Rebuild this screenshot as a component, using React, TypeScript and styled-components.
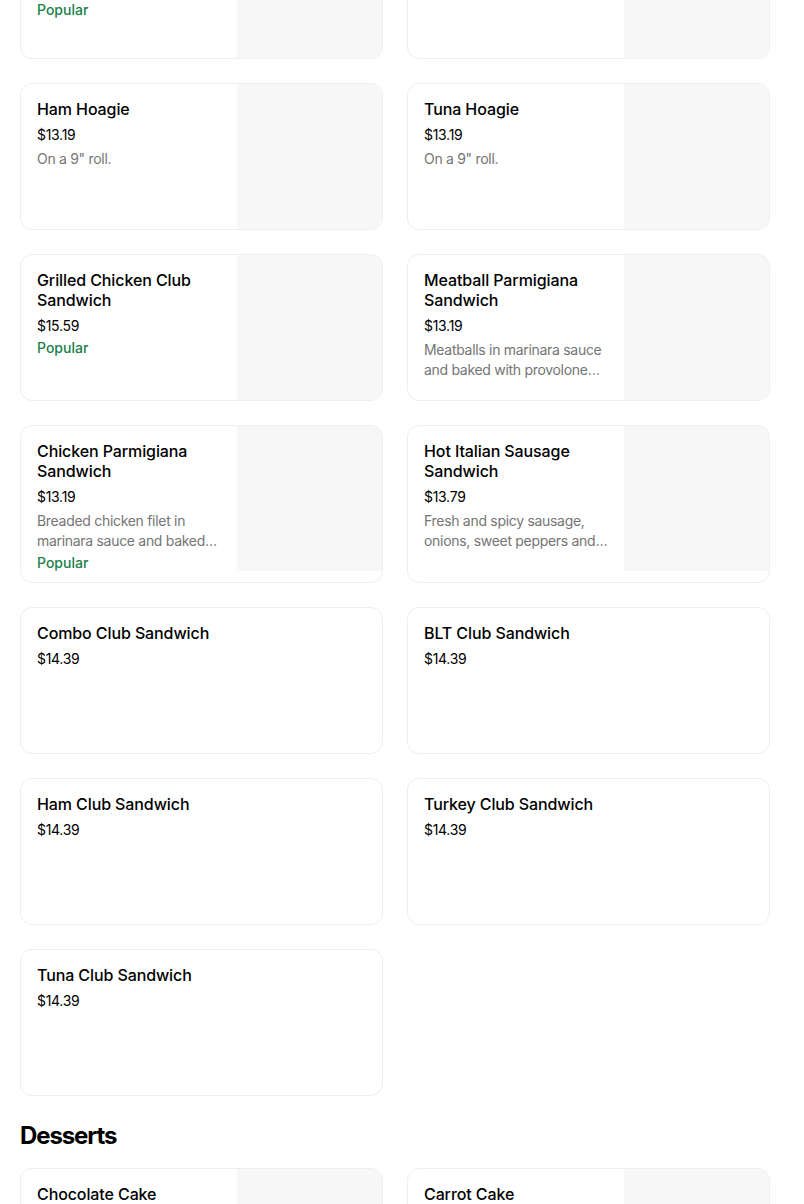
import React from "react";
import styled, { createGlobalStyle } from "styled-components";

const GlobalStyle = createGlobalStyle`
  html, body { margin: 0; padding: 0; background: #ffffff; }
  body {
    font-family: Inter, "Noto Sans", "Liberation Sans", sans-serif;
    color: #000000;
    -webkit-font-smoothing: antialiased;
    overflow: hidden;
  }
  * { box-sizing: border-box; }
`;

const Page = styled.main`
  width: 770px;
  padding: 0 0 0 20px;
  margin-top: -88px;
`;

const Section = styled.section`
  display: flex;
  flex-direction: column;
`;

const SectionTitle = styled.h2`
  margin: 24px 0 16px;
  font-size: 24px;
  line-height: 32px;
  font-weight: 700;
  letter-spacing: -1.1px;
  color: #000;
`;

const Grid = styled.div`
  display: grid;
  grid-template-columns: 363px 363px;
  column-gap: 24px;
  row-gap: 24px;
`;

const Card = styled.article`
  display: flex;
  border: 1px solid #eeeeee;
  border-radius: 12px;
  overflow: hidden;
  background: #ffffff;
  min-height: 147px;
`;

const Info = styled.div`
  flex: 1 1 auto;
  min-width: 0;
  padding: 15px 16px 11px;
  display: flex;
  flex-direction: column;
`;

const Thumb = styled.div`
  flex: 0 0 145px;
  width: 145px;
  height: 145px;
  background: #f7f7f7;
`;

const Name = styled.h3`
  margin: 0;
  font-size: 16px;
  line-height: 20px;
  font-weight: 500;
  letter-spacing: -0.1px;
  color: #000;
`;

const Price = styled.div`
  margin-top: 6px;
  font-size: 14px;
  line-height: 20px;
  font-weight: 400;
  color: #000;
  letter-spacing: -0.3px;
`;

const Desc = styled.p`
  margin: 4px 0 0;
  font-size: 14px;
  line-height: 20px;
  color: #757575;
  letter-spacing: -0.3px;
  display: -webkit-box;
  -webkit-line-clamp: 2;
  -webkit-box-orient: vertical;
  overflow: hidden;
`;

const Badge = styled.div`
  margin-top: 4px;
  font-size: 14px;
  line-height: 16px;
  font-weight: 500;
  color: #1a8048;
`;

type Item = {
  name: string;
  price: string;
  desc?: string;
  popular?: boolean;
  image?: boolean;
};

const sandwiches: Item[] = [
  {
    name: "Italian Hoagie",
    price: "$13.79",
    desc: "On a 9\" roll.",
    popular: true,
    image: true,
  },
  {
    name: "Turkey Hoagie",
    price: "$13.19",
    desc: "On a 9\" roll.",
    image: true,
  },
  { name: "Ham Hoagie", price: "$13.19", desc: "On a 9\" roll.", image: true },
  { name: "Tuna Hoagie", price: "$13.19", desc: "On a 9\" roll.", image: true },
  {
    name: "Grilled Chicken Club Sandwich",
    price: "$15.59",
    popular: true,
    image: true,
  },
  {
    name: "Meatball Parmigiana Sandwich",
    price: "$13.19",
    desc: "Meatballs in marinara sauce and baked with provolone cheese.",
    image: true,
  },
  {
    name: "Chicken Parmigiana Sandwich",
    price: "$13.19",
    desc: "Breaded chicken filet in marinara sauce and baked with provolone cheese.",
    popular: true,
    image: true,
  },
  {
    name: "Hot Italian Sausage Sandwich",
    price: "$13.79",
    desc: "Fresh and spicy sausage, onions, sweet peppers and marinara sauce.",
    image: true,
  },
  { name: "Combo Club Sandwich", price: "$14.39" },
  { name: "BLT Club Sandwich", price: "$14.39" },
  { name: "Ham Club Sandwich", price: "$14.39" },
  { name: "Turkey Club Sandwich", price: "$14.39" },
  { name: "Tuna Club Sandwich", price: "$14.39" },
];

const desserts: Item[] = [
  { name: "Chocolate Cake", price: "$5.99", image: true },
  { name: "Carrot Cake", price: "$5.99", image: true },
];

function MenuCard({ item }: { item: Item }) {
  return (
    <Card>
      <Info>
        <Name>{item.name}</Name>
        <Price>{item.price}</Price>
        {item.desc && <Desc>{item.desc}</Desc>}
        {item.popular && <Badge>Popular</Badge>}
      </Info>
      {item.image && <Thumb />}
    </Card>
  );
}

export default function App() {
  return (
    <>
      <GlobalStyle />
      <Page>
        <Section>
          <Grid>
            {sandwiches.map((it) => (
              <MenuCard key={it.name} item={it} />
            ))}
          </Grid>
        </Section>
        <Section>
          <SectionTitle>Desserts</SectionTitle>
          <Grid>
            {desserts.map((it) => (
              <MenuCard key={it.name} item={it} />
            ))}
          </Grid>
        </Section>
      </Page>
    </>
  );
}
